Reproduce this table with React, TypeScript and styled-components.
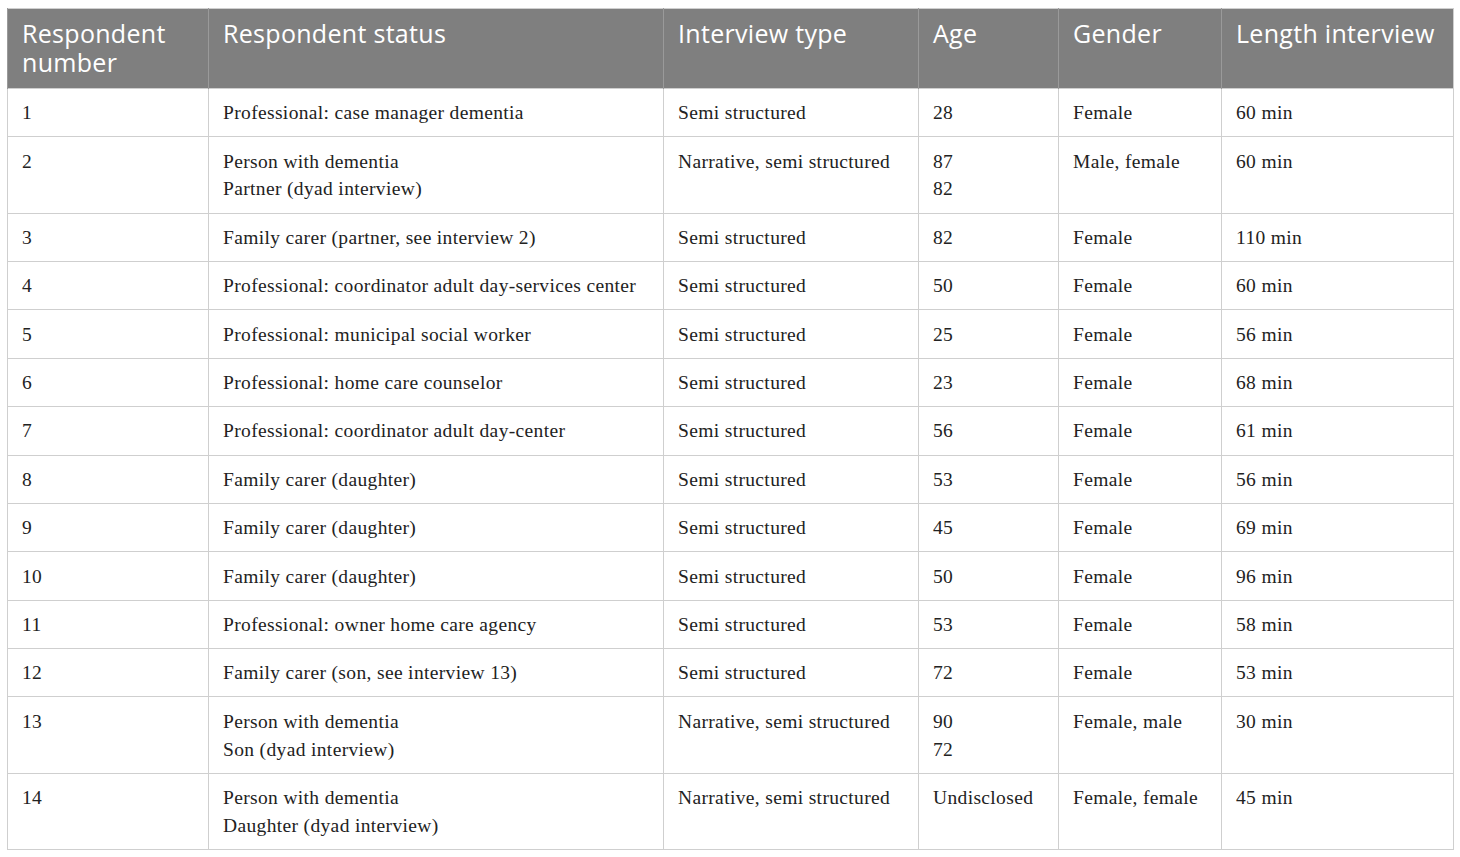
import React from "react";
import styled, { createGlobalStyle } from "styled-components";

const Global = createGlobalStyle`
  html, body { margin: 0; padding: 0; background: #ffffff; }
  body { padding: 8px 0 0 7px; }
`;

const Table = styled.table`
  width: 1446px;
  border-collapse: collapse;
  table-layout: fixed;
  border: 1px solid #cfcfcf;
`;

const HeadCell = styled.th<{ $w: number }>`
  width: ${(p) => p.$w}px;
  background: #7f7f7f;
  color: #ffffff;
  font-family: "Open Sans", "Noto Sans", sans-serif;
  font-weight: 400;
  font-size: 25px;
  line-height: 28.5px;
  text-align: left;
  vertical-align: top;
  padding: 10px 14px 10px 14px;
  height: 80px;
  box-sizing: border-box;
  border-left: 1px solid #9a9a9a;
  letter-spacing: 0.3px;
`;

const Cell = styled.td`
  font-family: "Liberation Serif", "Times New Roman", serif;
  font-size: 19.5px;
  letter-spacing: 0.35px;
  line-height: 27.8px;
  color: #222222;
  vertical-align: top;
  padding: 10.3px 14px 9.3px 14px;
  border: 1px solid #cfcfcf;
`;

const Line = styled.div``;

const cols = [
  { t: "Respondent number", w: 201 },
  { t: "Respondent status", w: 455 },
  { t: "Interview type", w: 255 },
  { t: "Age", w: 140 },
  { t: "Gender", w: 163 },
  { t: "Length interview", w: 232 },
];

const rows: string[][][] = [
  [["1"], ["Professional: case manager dementia"], ["Semi structured"], ["28"], ["Female"], ["60 min"]],
  [["2"], ["Person with dementia", "Partner (dyad interview)"], ["Narrative, semi structured"], ["87", "82"], ["Male, female"], ["60 min"]],
  [["3"], ["Family carer (partner, see interview 2)"], ["Semi structured"], ["82"], ["Female"], ["110 min"]],
  [["4"], ["Professional: coordinator adult day-services center"], ["Semi structured"], ["50"], ["Female"], ["60 min"]],
  [["5"], ["Professional: municipal social worker"], ["Semi structured"], ["25"], ["Female"], ["56 min"]],
  [["6"], ["Professional: home care counselor"], ["Semi structured"], ["23"], ["Female"], ["68 min"]],
  [["7"], ["Professional: coordinator adult day-center"], ["Semi structured"], ["56"], ["Female"], ["61 min"]],
  [["8"], ["Family carer (daughter)"], ["Semi structured"], ["53"], ["Female"], ["56 min"]],
  [["9"], ["Family carer (daughter)"], ["Semi structured"], ["45"], ["Female"], ["69 min"]],
  [["10"], ["Family carer (daughter)"], ["Semi structured"], ["50"], ["Female"], ["96 min"]],
  [["11"], ["Professional: owner home care agency"], ["Semi structured"], ["53"], ["Female"], ["58 min"]],
  [["12"], ["Family carer (son, see interview 13)"], ["Semi structured"], ["72"], ["Female"], ["53 min"]],
  [["13"], ["Person with dementia", "Son (dyad interview)"], ["Narrative, semi structured"], ["90", "72"], ["Female, male"], ["30 min"]],
  [["14"], ["Person with dementia", "Daughter (dyad interview)"], ["Narrative, semi structured"], ["Undisclosed"], ["Female, female"], ["45 min"]],
];

export default function App() {
  return (
    <>
      <Global />
      <Table>
        <thead>
          <tr>
            {cols.map((c) => (
              <HeadCell key={c.t} $w={c.w}>{c.t}</HeadCell>
            ))}
          </tr>
        </thead>
        <tbody>
          {rows.map((r, i) => (
            <tr key={i}>
              {r.map((cell, j) => (
                <Cell key={j}>
                  {cell.map((l, k) => (
                    <Line key={k}>{l}</Line>
                  ))}
                </Cell>
              ))}
            </tr>
          ))}
        </tbody>
      </Table>
    </>
  );
}
